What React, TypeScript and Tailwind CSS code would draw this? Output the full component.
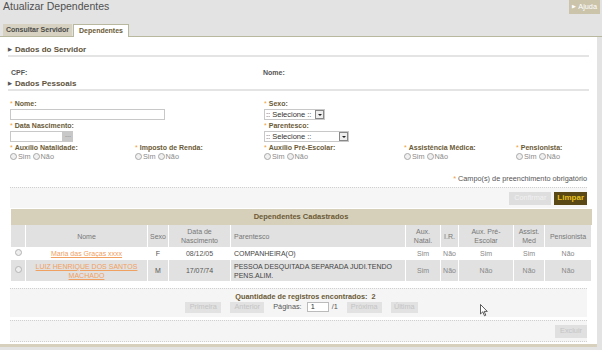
import React from "react";

const font = { fontFamily: '"Liberation Sans", Arial, sans-serif' };

const Req = () => <span className="text-[#f0a040] font-normal mr-[2px]">*</span>;

const Radio = ({ label }: { label: string }) => (
    <span className="inline-flex items-center mr-[2px]">
        <span className="w-[7px] h-[7px] rounded-full border border-[#a8a8a8] bg-[#f0f0f0] mr-[1px]" />
        <span>{label}</span>
    </span>
);

const Select = ({ width }: { width: string }) => (
    <div className={`${width} h-[11px] flex items-center justify-between bg-white border border-[#c8c8c8] text-[7.5px] text-[#333] pl-[1px]`}>
        <span className="leading-none">:: Selecione ::</span>
        <span className="w-[9px] h-[9px] border border-[#888] bg-[#eee] flex items-center justify-center">
            <span className="w-0 h-0 border-l-[2px] border-r-[2px] border-t-[2px] border-l-transparent border-r-transparent border-t-[#222]" />
        </span>
    </div>
);

const Label = ({ children }: { children: React.ReactNode }) => (
    <div className="h-[9px] leading-[9px] font-bold text-[7px] text-[#6b5a36] whitespace-nowrap">
        <Req />
        {children}
    </div>
);

const RadioGroup = ({ label, width }: { label: string; width: string }) => (
    <div className={`${width} flex flex-col`}>
        <Label>{label}</Label>
        <div className="h-[9px] leading-[9px] text-[#8a8a8a] flex items-center">
            <Radio label="Sim" />
            <Radio label="Não" />
        </div>
    </div>
);

const SectionHeader = ({ title }: { title: string }) => (
    <div className="flex items-center h-[12px] mx-[8px] border-b-2 border-[#e4e4e4] text-[8px] font-bold text-[#5e533c]">
        <span className="text-[5px] mr-[3px] text-[#555]">▶</span>
        {title}
    </div>
);

const rows = [
    { nome: ["Maria das Graças xxxx"], sexo: "F", nasc: "08/12/05", par: ["COMPANHEIRA(O)"], v: ["Sim", "Não", "Sim", "Sim", "Não"] },
    { nome: ["LUIZ HENRIQUE DOS SANTOS", "MACHADO"], sexo: "M", nasc: "17/07/74", par: ["PESSOA DESQUITADA SEPARADA JUDI.TENDO", "PENS.ALIM."], v: ["Sim", "Não", "Não", "Não", "Não"] },
];

const PageBtn = ({ label, w }: { label: string; w: string }) => (
    <span className={`${w} h-[11px] bg-[#e2e2e2] text-[#c4c4c4] flex items-center justify-center`}>{label}</span>
);

export default function App() {
    return (
        <div className="w-[602px] h-[350px] bg-[#e3e3e3] overflow-hidden relative text-[7.3px]" style={font}>
            {/* Title */}
            <div className="h-[24px] flex justify-between">
                <div className="pl-[3px] text-[10.5px] leading-[13px] text-[#505050]">Atualizar Dependentes</div>
                <div className="h-[14px] mr-[2px] px-[3px] bg-[#cbc4ab] text-white flex items-center gap-[2px]">
                    <span className="text-[5px]">▶</span>Ajuda
                </div>
            </div>

            {/* Tabs */}
            <div className="h-[13px] flex items-end pl-[3px] border-b border-[#b7b89d]">
                <div className="h-[12px] w-[69px] bg-[#d6d1c0] text-[#4a4a4a] font-bold text-[7px] whitespace-nowrap flex items-center justify-center">Consultar Servidor</div>
                <div className="h-[13px] w-[56px] ml-[1px] bg-white border border-b-0 border-[#b7b89d] text-[#6b5a36] font-bold text-[7px] flex items-center justify-center -mb-px">Dependentes</div>
            </div>

            {/* Panel */}
            <div className="w-[597px] h-[310px] bg-white border-b-[3px] border-[#d6d0bc] flex flex-col pt-[8px]">
                <SectionHeader title="Dados do Servidor" />
                <div className="h-[22px] flex items-end pb-[1px] text-[#555] font-bold text-[7px]">
                    <span className="pl-[11px] w-[263px]">CPF:</span>
                    <span>Nome:</span>
                </div>
                <SectionHeader title="Dados Pessoais" />

                <div className="pt-[8px] px-[10px] flex flex-col gap-[1px]">
                    <div className="flex">
                        <div className="w-[254px] flex flex-col gap-[1px]">
                            <Label>Nome:</Label>
                            <div className="w-[155px] h-[11px] bg-white border border-[#c8c8c8]" />
                        </div>
                        <div className="flex flex-col gap-[1px]">
                            <Label>Sexo:</Label>
                            <Select width="w-[61px]" />
                        </div>
                    </div>
                    <div className="flex">
                        <div className="w-[254px] flex flex-col gap-[1px]">
                            <Label>Data Nascimento:</Label>
                            <div className="flex h-[11px]">
                                <div className="w-[53px] bg-white border border-[#c8c8c8]" />
                                <div className="w-[10px] bg-[#c8c8c8] text-[#777] text-[7px] leading-[8px] text-center">...</div>
                            </div>
                        </div>
                        <div className="flex flex-col gap-[1px]">
                            <Label>Parentesco:</Label>
                            <Select width="w-[85px]" />
                        </div>
                    </div>
                    <div className="flex">
                        <RadioGroup label="Auxílio Natalidade:" width="w-[125px]" />
                        <RadioGroup label="Imposto de Renda:" width="w-[129px]" />
                        <RadioGroup label="Auxílio Pré-Escolar:" width="w-[140px]" />
                        <RadioGroup label="Assistência Médica:" width="w-[112px]" />
                        <RadioGroup label="Pensionista:" width="w-[70px]" />
                    </div>
                </div>

                <div className="mt-[13px] mx-[10px] text-right text-[#555] h-[10px] leading-[10px]">
                    <Req />Campo(s) de preenchimento obrigatório
                </div>

                <div className="mt-[3px] mx-[10px] h-[21px] bg-[#f6f6f6] border-t border-dotted border-[#cfcfcf] flex items-center justify-end gap-[3px]">
                    <span className="h-[13px] px-[5px] bg-[#dedede] text-[#f2f2f2] flex items-center">Confirmar</span>
                    <span className="h-[13px] px-[3px] bg-[#5a4816] text-[#e8c21c] font-bold text-[8px] flex items-center">Limpar</span>
                </div>

                {/* Table */}
                <table className="mx-[10px] mt-[1px] w-[582px] border-collapse text-[7px] text-[#555]">
                    <thead>
                        <tr>
                            <th colSpan={11} className="h-[16px] bg-[#d6cfb9] text-[#6b5a36] text-[7.5px] font-bold">Dependentes Cadastrados</th>
                        </tr>
                        <tr className="h-[22px] bg-[#e1e1e1] text-[#777] font-normal leading-[9px]">
                            <th className="w-[15px] border-x border-white border-t-0"></th>
                            <th className="w-[122px] border-x border-white font-normal">Nome</th>
                            <th className="w-[21px] border-x border-white font-normal">Sexo</th>
                            <th className="w-[62px] border-x border-white font-normal">Data de<br />Nascimento</th>
                            <th className="w-[175px] border-x border-white font-normal text-left pl-[3px]">Parentesco</th>
                            <th className="w-[35px] border-x border-white font-normal">Aux.<br />Natal.</th>
                            <th className="w-[18px] border-x border-white font-normal">I.R.</th>
                            <th className="w-[55px] border-x border-white font-normal">Aux. Pré-<br />Escolar</th>
                            <th className="w-[31px] border-x border-white font-normal">Assist.<br />Med</th>
                            <th className="border-x border-white font-normal">Pensionista</th>
                        </tr>
                    </thead>
                    <tbody>
                        {rows.map((r, i) => (
                            <tr key={i} className={`${i === 1 ? "bg-[#e1e1e1] h-[21px]" : "bg-white h-[13px]"} leading-[9px]`}>
                                <td className="border-x border-white text-center">
                                    <span className="inline-block w-[7px] h-[7px] rounded-full border border-[#b4b4b4] bg-[#eee]" />
                                </td>
                                <td className="border-x border-white text-center text-[#f0a060] underline">
                                    {r.nome.map((n, k) => <div key={k}>{n}</div>)}
                                </td>
                                <td className="border-x border-white text-center">{r.sexo}</td>
                                <td className="border-x border-white text-center">{r.nasc}</td>
                                <td className="border-x border-white pl-[3px] text-[#444]">
                                    {r.par.map((n, k) => <div key={k} className="whitespace-nowrap">{n}</div>)}
                                </td>
                                {r.v.map((x, k) => (
                                    <td key={k} className="border-x border-white text-center text-[#888]">{x}</td>
                                ))}
                            </tr>
                        ))}
                    </tbody>
                </table>

                <div className="mt-[7px] mx-[10px] h-[29px] bg-[#f5f5f5] border-t border-dotted border-[#cfcfcf] flex flex-col items-center pt-[3px]">
                    <div className="font-bold text-[7.3px] text-[#6b5a36] h-[9px] leading-[9px] pl-[14px]">Quantidade de registros encontrados:&nbsp;&nbsp;2</div>
                    <div className="flex items-center h-[12px] gap-[9px] text-[#555] pl-[6px]">
                        <PageBtn label="Primeira" w="w-[36px]" />
                        <PageBtn label="Anterior" w="w-[34px]" />
                        <span className="flex items-center gap-[5px]">
                            Páginas:
                            <span className="w-[22px] h-[10px] bg-white border border-[#bbb] text-[#333] pl-[3px] leading-[8px]">1</span>
                            <span className="-ml-[2px]">/1</span>
                        </span>
                        <PageBtn label="Próxima" w="w-[35px]" />
                        <PageBtn label="Última" w="w-[27px]" />
                    </div>
                </div>

                <div className="mt-[3px] mx-[10px] h-[22px] bg-[#f5f5f5] border-t border-b border-dotted border-[#cfcfcf] flex items-center justify-end">
                    <span className="h-[13px] w-[32px] bg-[#e0e0e0] text-[#c4c4c4] flex items-center justify-center">Excluir</span>
                </div>
            </div>

            {/* mouse cursor */}
            <svg className="absolute left-[480px] top-[304px]" width="8" height="13" viewBox="0 0 8 13">
                <path d="M0.5 0.5 L0.5 10 L2.8 7.8 L4.5 11.8 L5.8 11.2 L4.2 7.4 L7.3 7.4 Z" fill="white" stroke="#333" strokeWidth="0.8" />
            </svg>
        </div>
    );
}
